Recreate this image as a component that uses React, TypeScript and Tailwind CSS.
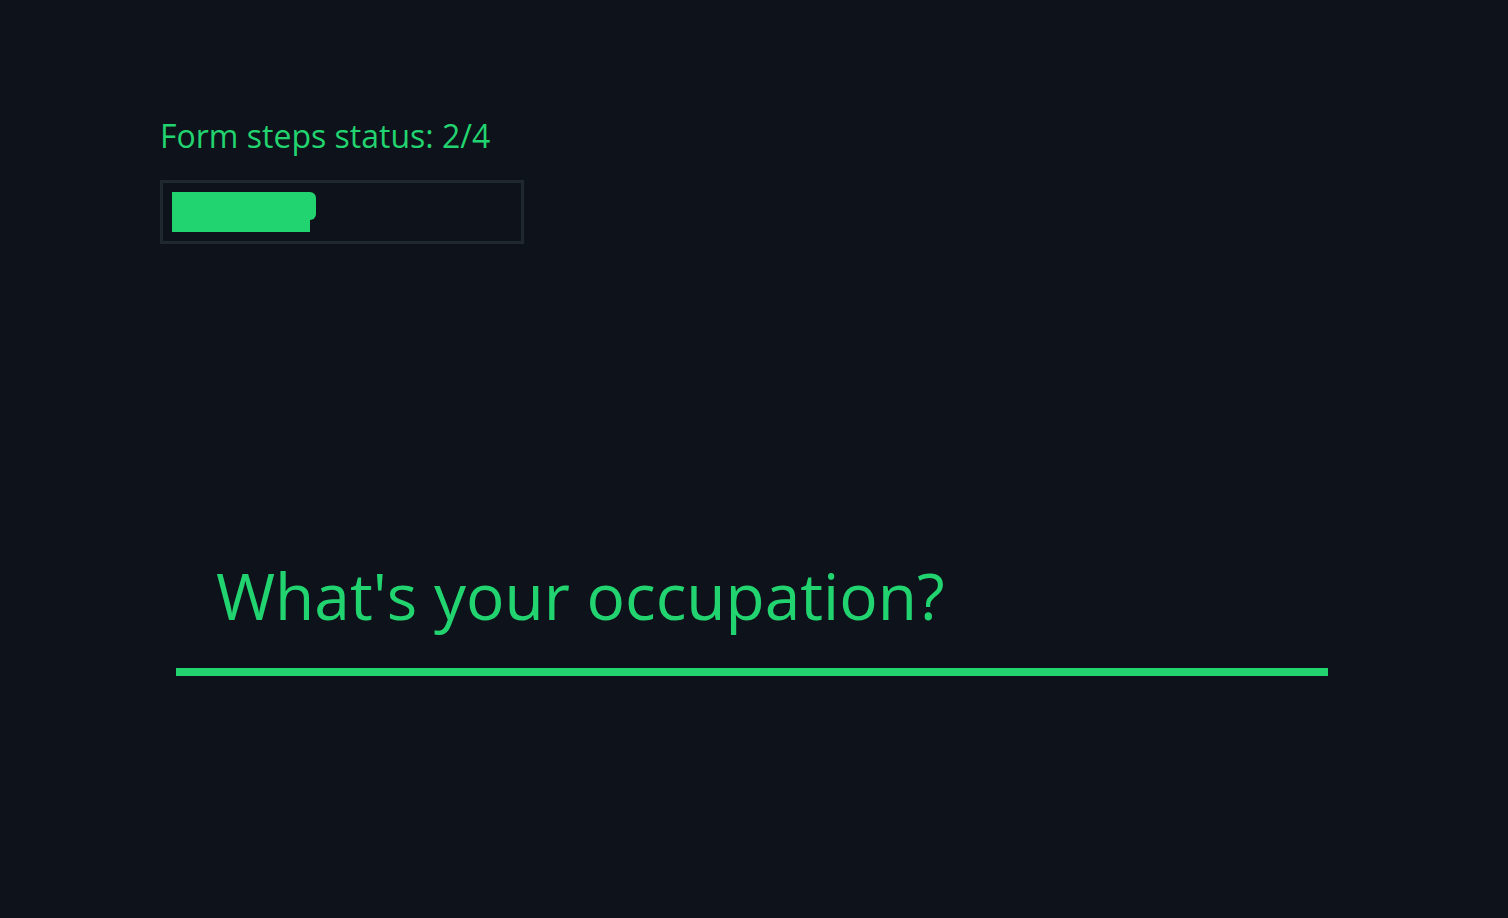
export default function App() {
  return (
    <div
      className="min-h-screen w-full bg-[#0e121a] text-[#22d46f]"
      style={{ fontFamily: '"Open Sans", "Noto Sans", sans-serif' }}
    >
      <div className="pl-[160px] pt-[114px]">
        <p className="text-[32px] leading-[44px]">Form steps status: 2/4</p>

        <div className="mt-[22px] w-[364px] h-[64px] border-[3px] border-[#1f2731] p-[9px]">
          <div className="relative w-[138px] h-[40px] bg-[#22d46f]">
            <div className="absolute left-[130px] top-0 w-[14px] h-[28px] rounded-r-[6px] bg-[#22d46f]" />
          </div>
        </div>
      </div>

      <div className="ml-[176px] mt-[312px] w-[1152px] border-b-[8px] border-[#22d46f] pl-[40px] pb-[32px]">
        <h1 className="text-[64px] leading-[80px] font-normal">What's your occupation?</h1>
      </div>
    </div>
  )
}
